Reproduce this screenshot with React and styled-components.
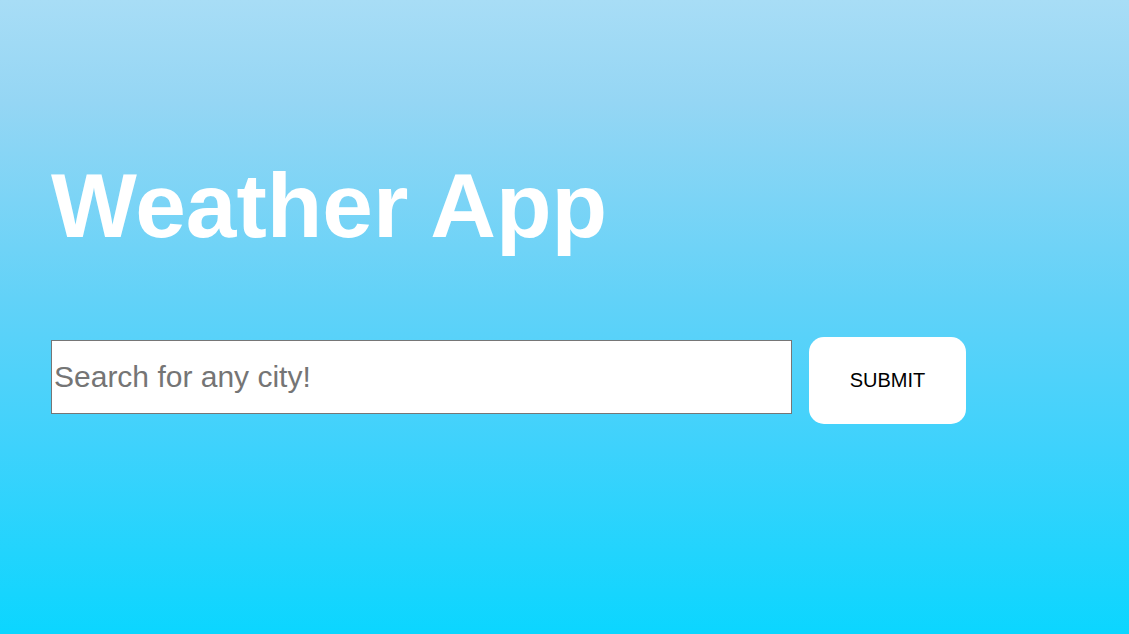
import React, { useState } from "react";
import styled, { createGlobalStyle } from "styled-components";

const GlobalStyle = createGlobalStyle`
    html, body {
        margin: 0;
        padding: 0;
        height: 100%;
    }
    body {
        font-family: "Liberation Sans", Arial, sans-serif;
    }
    #root {
        min-height: 100%;
    }
`

const Page = styled.div`
    min-height: 634px;
    box-sizing: border-box;
    padding: 155px 50px 0 51px;
    background: linear-gradient(180deg, #a8ddf6 0%, #95d6f4 16%, #62d2f8 47%, #3dd2fc 71%, #22d4fd 87%, #0bd6ff 100%);
`

const Title = styled.h1`
    margin: 0;
    font-size: 91px;
    font-weight: 700;
    color: #ffffff;
    line-height: 101px;
`

const SearchRow = styled.form`
    display: flex;
    align-items: baseline;
    gap: 17px;
    margin-top: 81px;
`

const SearchInput = styled.input`
    box-sizing: border-box;
    width: 741px;
    height: 74px;
    padding: 0 2px;
    border: 1px solid #767676;
    background: #ffffff;
    font-family: "Liberation Sans", Arial, sans-serif;
    font-size: 30px;
    color: #222;
    outline: none;
    &::placeholder {
        color: #757575;
    }
`

const SubmitButton = styled.button`
    box-sizing: border-box;
    width: 157px;
    height: 87px;
    border: none;
    border-radius: 15px;
    background: #ffffff;
    font-family: "Liberation Sans", Arial, sans-serif;
    font-size: 20px;
    color: #000;
    cursor: pointer;
`

function App() {
    const [city, setCity] = useState("");

    return (
        <>
            <GlobalStyle />
            <Page>
                <Title>Weather App</Title>
                <SearchRow onSubmit={e => e.preventDefault()}>
                    <SearchInput
                        placeholder="Search for any city!"
                        value={city}
                        onChange={e => setCity(e.target.value)}
                    />
                    <SubmitButton type="submit">SUBMIT</SubmitButton>
                </SearchRow>
            </Page>
        </>
    )
}

export default App;
